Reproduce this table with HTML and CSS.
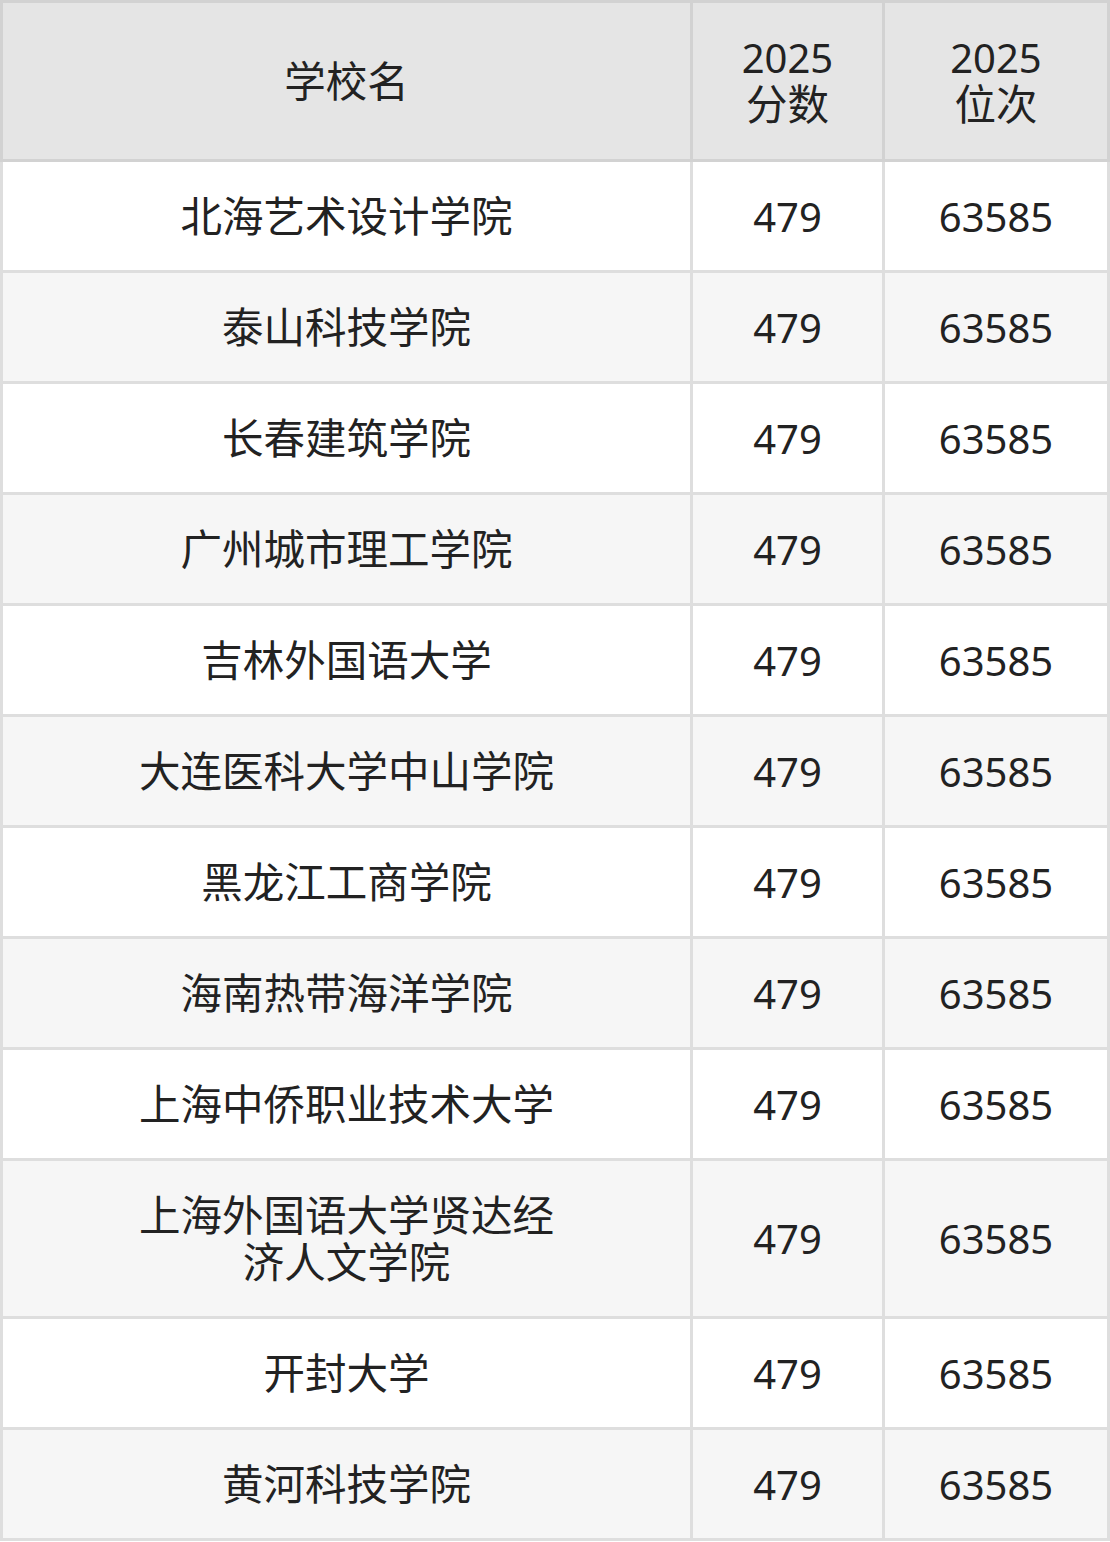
FILE: index.html
```html
<!DOCTYPE html>
<html lang="zh-CN">
<head>
<meta charset="utf-8">
<title>2025 分数 位次</title>
<link rel="stylesheet" href="styles.css">
</head>
<body>
<div class="table">
  <div class="row head">
    <div class="cell name">学校名</div>
    <div class="cell"><span class="num">2025</span><br>分数</div>
    <div class="cell"><span class="num">2025</span><br>位次</div>
  </div>
  <div class="row"><div class="cell name">北海艺术设计学院</div><div class="cell num">479</div><div class="cell num">63585</div></div>
  <div class="row alt"><div class="cell name">泰山科技学院</div><div class="cell num">479</div><div class="cell num">63585</div></div>
  <div class="row"><div class="cell name">长春建筑学院</div><div class="cell num">479</div><div class="cell num">63585</div></div>
  <div class="row alt"><div class="cell name">广州城市理工学院</div><div class="cell num">479</div><div class="cell num">63585</div></div>
  <div class="row"><div class="cell name">吉林外国语大学</div><div class="cell num">479</div><div class="cell num">63585</div></div>
  <div class="row alt"><div class="cell name">大连医科大学中山学院</div><div class="cell num">479</div><div class="cell num">63585</div></div>
  <div class="row"><div class="cell name">黑龙江工商学院</div><div class="cell num">479</div><div class="cell num">63585</div></div>
  <div class="row alt"><div class="cell name">海南热带海洋学院</div><div class="cell num">479</div><div class="cell num">63585</div></div>
  <div class="row"><div class="cell name">上海中侨职业技术大学</div><div class="cell num">479</div><div class="cell num">63585</div></div>
  <div class="row alt"><div class="cell name">上海外国语大学贤达经济人文学院</div><div class="cell num">479</div><div class="cell num">63585</div></div>
  <div class="row"><div class="cell name">开封大学</div><div class="cell num">479</div><div class="cell num">63585</div></div>
  <div class="row alt"><div class="cell name">黄河科技学院</div><div class="cell num">479</div><div class="cell num">63585</div></div>
</div>
</body>
</html>
```

FILE: styles.css
```css
html, body {
  margin: 0;
  padding: 0;
  background: #ffffff;
}

.table {
  width: 1110px;
  font-family: "Noto Sans", "Noto Sans CJK SC", sans-serif;
  font-size: 41.5px;
  line-height: 47px;
  color: #222222;
}

.num {
  font-size: 40px;
}

.row {
  display: grid;
  grid-template-columns: 693px 192px 225px;
  background: #ffffff;
}

.row.alt {
  background: #f6f6f6;
}

.cell {
  box-sizing: border-box;
  display: flex;
  flex-wrap: wrap;
  align-items: center;
  align-content: center;
  justify-content: center;
  text-align: center;
  padding: 30.5px 0;
  border-right: 3px solid #dedede;
  border-bottom: 3px solid #dedede;
}

.cell.name {
  border-left: 3px solid #dedede;
  padding-left: 131px;
  padding-right: 131px;
}

.head {
  background: #e5e5e5;
}

.head .cell {
  display: block;
  padding-top: 31px;
  padding-bottom: 31px;
  border-color: #d2d2d2;
  border-top: 3px solid #d2d2d2;
}

.head .cell.name {
  display: flex;
  border-left-color: #d2d2d2;
}
```
